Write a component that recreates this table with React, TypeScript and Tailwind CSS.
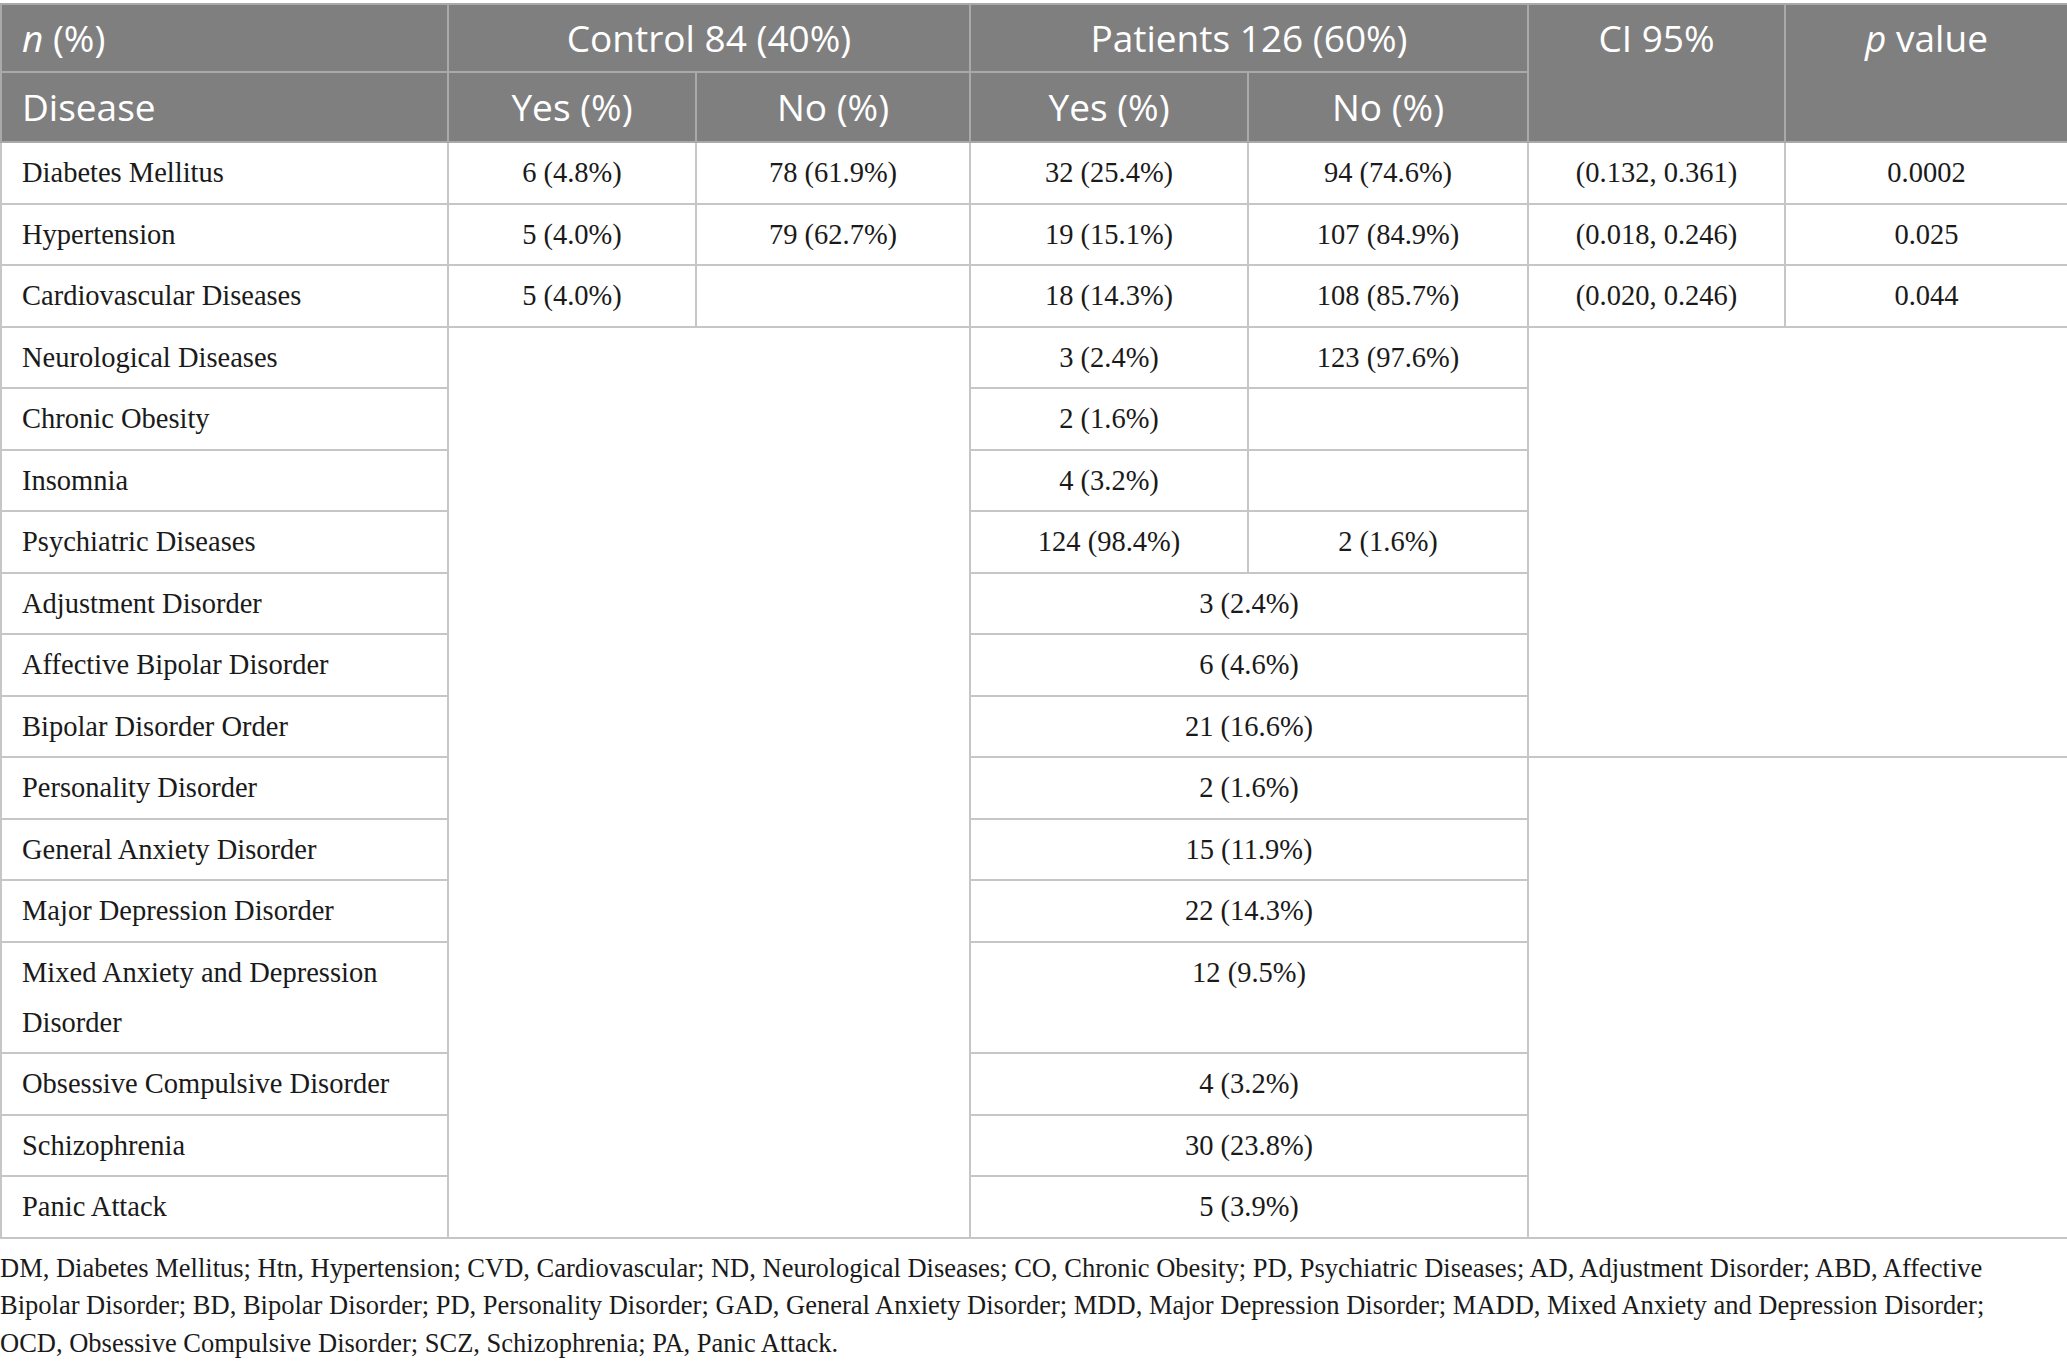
const head = "border-2 border-[#a9a9a9] bg-[#7f7f7f] text-white font-['Open_Sans',sans-serif] text-[37px] font-normal";
const cell = "border-2 border-[#c6c6c6] pt-[5px] pb-[4.5px] leading-[50px] align-top text-center";
const first = "border-2 border-[#c6c6c6] pt-[5px] pb-[4.5px] pl-[20px] pr-2 leading-[50px] align-top text-left";

const widths = [447, 248, 274, 278, 280, 257, 283];

export default function App() {
  return (
    <div className="min-h-screen bg-white pt-[3px] text-[#1a1a1a] font-['Liberation_Serif',serif]">
      <table className="w-[2067px] table-fixed border-collapse text-[28.5px]">
        <colgroup>
          {widths.map((w, i) => (
            <col key={i} style={{ width: w }} />
          ))}
        </colgroup>
        <thead>
          <tr className="h-[68px]">
            <th className={`${head} pl-[20px] text-left align-middle`}>
              <i>n</i> (%)
            </th>
            <th colSpan={2} className={`${head} align-middle`}>Control 84 (40%)</th>
            <th colSpan={2} className={`${head} align-middle`}>Patients 126 (60%)</th>
            <th rowSpan={2} className={`${head} pt-[5px] align-top`}>CI 95%</th>
            <th rowSpan={2} className={`${head} pt-[5px] align-top`}>
              <i>p</i> value
            </th>
          </tr>
          <tr className="h-[70px]">
            <th className={`${head} pl-[20px] text-left align-middle`}>Disease</th>
            <th className={`${head} align-middle`}>Yes (%)</th>
            <th className={`${head} align-middle`}>No (%)</th>
            <th className={`${head} align-middle`}>Yes (%)</th>
            <th className={`${head} align-middle`}>No (%)</th>
          </tr>
        </thead>
        <tbody>
          <tr>
            <td className={first}>Diabetes Mellitus</td>
            <td className={cell}>6 (4.8%)</td>
            <td className={cell}>78 (61.9%)</td>
            <td className={cell}>32 (25.4%)</td>
            <td className={cell}>94 (74.6%)</td>
            <td className={cell}>(0.132, 0.361)</td>
            <td className={cell}>0.0002</td>
          </tr>
          <tr>
            <td className={first}>Hypertension</td>
            <td className={cell}>5 (4.0%)</td>
            <td className={cell}>79 (62.7%)</td>
            <td className={cell}>19 (15.1%)</td>
            <td className={cell}>107 (84.9%)</td>
            <td className={cell}>(0.018, 0.246)</td>
            <td className={cell}>0.025</td>
          </tr>
          <tr>
            <td className={first}>Cardiovascular Diseases</td>
            <td className={cell}>5 (4.0%)</td>
            <td className={cell}></td>
            <td className={cell}>18 (14.3%)</td>
            <td className={cell}>108 (85.7%)</td>
            <td className={cell}>(0.020, 0.246)</td>
            <td className={cell}>0.044</td>
          </tr>
          <tr>
            <td className={first}>Neurological Diseases</td>
            <td colSpan={2} rowSpan={14} className={cell}></td>
            <td className={cell}>3 (2.4%)</td>
            <td className={cell}>123 (97.6%)</td>
            <td colSpan={2} rowSpan={7} className={cell}></td>
          </tr>
          <tr>
            <td className={first}>Chronic Obesity</td>
            <td className={cell}>2 (1.6%)</td>
            <td className={cell}></td>
          </tr>
          <tr>
            <td className={first}>Insomnia</td>
            <td className={cell}>4 (3.2%)</td>
            <td className={cell}></td>
          </tr>
          <tr>
            <td className={first}>Psychiatric Diseases</td>
            <td className={cell}>124 (98.4%)</td>
            <td className={cell}>2 (1.6%)</td>
          </tr>
          <tr>
            <td className={first}>Adjustment Disorder</td>
            <td colSpan={2} className={cell}>3 (2.4%)</td>
          </tr>
          <tr>
            <td className={first}>Affective Bipolar Disorder</td>
            <td colSpan={2} className={cell}>6 (4.6%)</td>
          </tr>
          <tr>
            <td className={first}>Bipolar Disorder Order</td>
            <td colSpan={2} className={cell}>21 (16.6%)</td>
          </tr>
          <tr>
            <td className={first}>Personality Disorder</td>
            <td colSpan={2} className={cell}>2 (1.6%)</td>
            <td colSpan={2} rowSpan={7} className={cell}></td>
          </tr>
          <tr>
            <td className={first}>General Anxiety Disorder</td>
            <td colSpan={2} className={cell}>15 (11.9%)</td>
          </tr>
          <tr>
            <td className={first}>Major Depression Disorder</td>
            <td colSpan={2} className={cell}>22 (14.3%)</td>
          </tr>
          <tr>
            <td className={first}>Mixed Anxiety and Depression Disorder</td>
            <td colSpan={2} className={cell}>12 (9.5%)</td>
          </tr>
          <tr>
            <td className={first}>Obsessive Compulsive Disorder</td>
            <td colSpan={2} className={cell}>4 (3.2%)</td>
          </tr>
          <tr>
            <td className={first}>Schizophrenia</td>
            <td colSpan={2} className={cell}>30 (23.8%)</td>
          </tr>
          <tr>
            <td className={first}>Panic Attack</td>
            <td colSpan={2} className={cell}>5 (3.9%)</td>
          </tr>
        </tbody>
      </table>
      <p className="mt-[11px] whitespace-nowrap text-[26.5px] leading-[37.5px]">
        DM, Diabetes Mellitus; Htn, Hypertension; CVD, Cardiovascular; ND, Neurological Diseases; CO, Chronic Obesity; PD, Psychiatric Diseases; AD, Adjustment Disorder; ABD, Affective
        <br />
        Bipolar Disorder; BD, Bipolar Disorder; PD, Personality Disorder; GAD, General Anxiety Disorder; MDD, Major Depression Disorder; MADD, Mixed Anxiety and Depression Disorder;
        <br />
        OCD, Obsessive Compulsive Disorder; SCZ, Schizophrenia; PA, Panic Attack.
      </p>
    </div>
  );
}
